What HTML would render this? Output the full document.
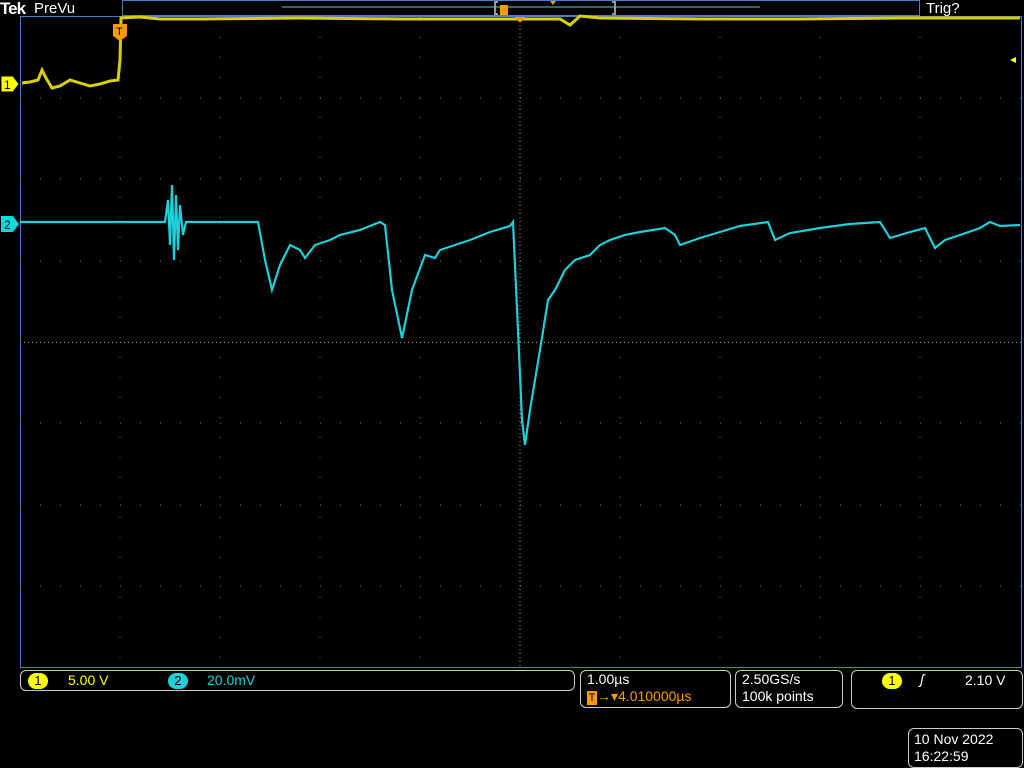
<!DOCTYPE html>
<html><head><meta charset="utf-8"><style>
body{margin:0;background:#000;width:1024px;height:768px;overflow:hidden;position:relative;font-family:"Liberation Sans",sans-serif;}
.t{position:absolute;white-space:nowrap;}
.box{position:absolute;border:1px solid #ccc;border-radius:6px;}
.dot{display:inline-block;width:20px;height:16px;border-radius:8px;text-align:center;color:#000;font-size:13px;line-height:16px;}
</style></head><body>
<svg width="1024" height="768" style="position:absolute;left:0;top:0">
<rect x="122.5" y="0.5" width="797" height="15" fill="#000" stroke="#4a7fc0"/>
<line x1="282" y1="7" x2="760" y2="7" stroke="#6cc" stroke-width="1"/>
<path d="M498 2 h-3 v12 h3 M612 2 h3 v12 h-3" stroke="#999" fill="none" stroke-width="2"/>
<rect x="500" y="5" width="8" height="10" fill="#f90"/>
<polygon points="550,1 556,1 553,5" fill="#f90"/>
<rect x="20.5" y="16.5" width="1001" height="651" fill="none" stroke="#4a7fc0"/>
<g stroke="#777" stroke-width="1" stroke-dasharray="1,19">
<line x1="120" y1="17" x2="120" y2="667"/><line x1="220" y1="17" x2="220" y2="667"/><line x1="320" y1="17" x2="320" y2="667"/><line x1="420" y1="17" x2="420" y2="667"/><line x1="620" y1="17" x2="620" y2="667"/><line x1="720" y1="17" x2="720" y2="667"/><line x1="820" y1="17" x2="820" y2="667"/><line x1="920" y1="17" x2="920" y2="667"/>
<line x1="20" y1="98" x2="1021" y2="98"/><line x1="20" y1="179" x2="1021" y2="179"/><line x1="20" y1="261" x2="1021" y2="261"/><line x1="20" y1="423" x2="1021" y2="423"/><line x1="20" y1="505" x2="1021" y2="505"/><line x1="20" y1="586" x2="1021" y2="586"/>
</g>
<g stroke="#999" stroke-width="1" stroke-dasharray="1,3">
<line x1="520" y1="17" x2="520" y2="667"/><line x1="20" y1="342.5" x2="1021" y2="342.5"/>
</g>
<polyline fill="none" stroke="#d8d000" stroke-width="3" points="22,83 30,82 38,80 42,70 46,78 52,88 60,86 70,80 80,83 90,86 100,84 110,81 118,80 120,60 121,18 140,17 160,19 200,19 300,18 400,19 500,19 560,19 570,25 580,16 600,18 700,19 800,19 900,18 1020,18"/>
<polyline fill="none" stroke="#1ed0d8" stroke-width="2.2" points="20,222 165,222 168,200 170,245 172,185 174,260 176,195 178,250 180,205 183,235 186,222 258,222 265,260 272,290 280,265 290,245 300,250 305,258 315,245 330,240 340,235 360,230 380,222 385,225 392,290 402,338 412,290 425,255 435,258 440,250 455,245 470,240 490,232 510,226 513,222 518,330 522,420 525,445 530,410 540,350 548,300 555,290 565,270 575,260 590,255 600,245 610,240 625,235 640,232 665,228 675,235 680,245 700,238 720,232 740,226 768,222 775,240 790,233 820,228 850,224 880,222 890,238 910,232 925,228 935,248 945,240 960,235 980,228 990,222 1000,226 1020,225"/>
<path d="M1 76 h12 l6 8 l-6 8 h-12 z" fill="#ff0" stroke="#000"/>
<text x="4" y="89" font-size="12" font-family="Liberation Sans" fill="#000">1</text>
<path d="M1 216 h12 l6 8 l-6 8 h-12 z" fill="#0dd"/>
<text x="4" y="229" font-size="12" font-family="Liberation Sans" fill="#000">2</text>
<path d="M113 24 h14 v12 l-7 5 l-7 -5 z" fill="#f90"/>
<text x="116" y="35" font-size="11" font-family="Liberation Sans" fill="#000">T</text>
<polygon points="515,17 525,17 520,23" fill="#f90"/>
<polygon points="1016,57 1010,60 1016,63" fill="#ff0"/>
</svg>
<div class="t" style="left:0;top:-1px;color:#fff;font-size:17px;font-weight:bold;letter-spacing:-1px">Tek</div>
<div class="t" style="left:34px;top:0;color:#fff;font-size:15px">PreVu</div>
<div class="t" style="left:926px;top:0;color:#fff;font-size:15px">Trig?</div>

<div class="box" style="left:20px;top:670px;width:553px;height:19px"></div>
<div class="t" style="left:28px;top:672px"><span class="dot" style="background:#ff0">1</span></div>
<div class="t" style="left:68px;top:672px;color:#ff0;font-size:14px">5.00 V</div>
<div class="t" style="left:168px;top:672px"><span class="dot" style="background:#1ed0d8">2</span></div>
<div class="t" style="left:207px;top:672px;color:#1ed0d8;font-size:14px">20.0mV</div>

<div class="box" style="left:580px;top:670px;width:149px;height:36px"></div>
<div class="t" style="left:587px;top:671px;color:#fff;font-size:14px">1.00µs</div>
<div class="t" style="left:587px;top:688px;color:#f90;font-size:14px"><span style="display:inline-block;background:#f90;color:#000;width:10px;height:14px;font-size:11px;line-height:14px;text-align:center">T</span>→▾4.010000µs</div>

<div class="box" style="left:735px;top:670px;width:106px;height:36px"></div>
<div class="t" style="left:742px;top:671px;color:#fff;font-size:14px">2.50GS/s</div>
<div class="t" style="left:742px;top:688px;color:#fff;font-size:14px">100k points</div>

<div class="box" style="left:851px;top:670px;width:170px;height:37px"></div>
<div class="t" style="left:882px;top:672px"><span class="dot" style="background:#ff0">1</span></div>
<div class="t" style="left:920px;top:671px;color:#fff;font-size:14px;font-style:italic">ʃ</div>
<div class="t" style="left:965px;top:672px;color:#fff;font-size:14px">2.10 V</div>

<div class="box" style="left:908px;top:728px;width:113px;height:38px"></div>
<div class="t" style="left:914px;top:731px;color:#fff;font-size:14px">10 Nov 2022</div>
<div class="t" style="left:914px;top:748px;color:#fff;font-size:14px">16:22:59</div>
</body></html>
